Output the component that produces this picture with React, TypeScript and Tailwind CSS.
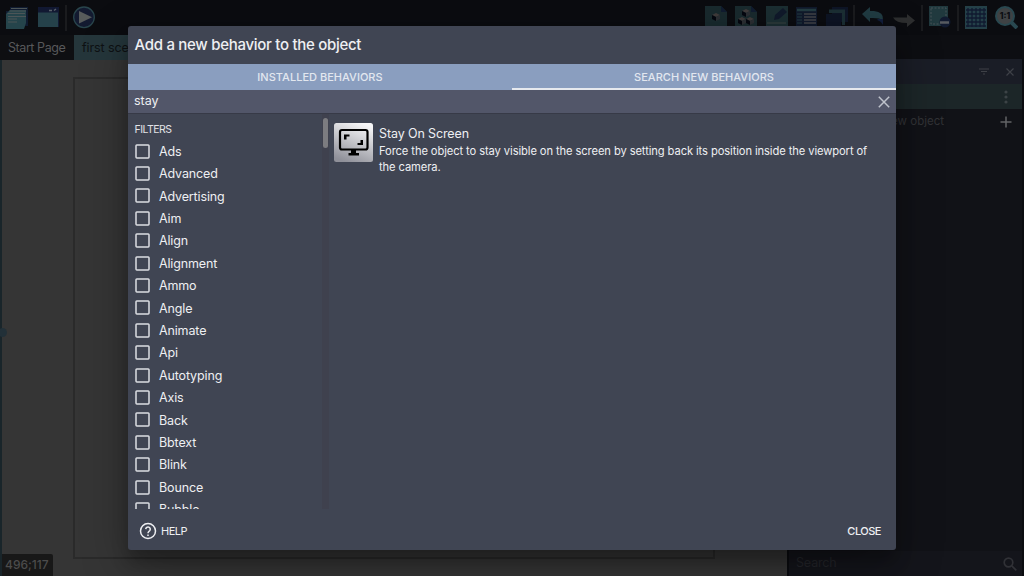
import type { ReactNode } from 'react';

const filters = [
  'Ads', 'Advanced', 'Advertising', 'Aim', 'Align', 'Alignment', 'Ammo', 'Angle', 'Animate',
  'Api', 'Autotyping', 'Axis', 'Back', 'Bbtext', 'Blink', 'Bounce', 'Bubble',
];

function Tool({ children, className = '' }: { children: ReactNode; className?: string }) {
  return (
    <svg viewBox="0 0 24 24" className={`h-6 w-6 shrink-0 ${className}`} fill="none">
      {children}
    </svg>
  );
}

function Separator({ className = '' }: { className?: string }) {
  return <div className={`h-[26px] w-[2px] shrink-0 bg-[#1a1b1e] ${className}`} />;
}

function Cube({ x, y }: { x: number; y: number }) {
  return (
    <g transform={`translate(${x} ${y})`}>
      <path d="M0 2 4 0 8 2 4 4Z" fill="#403b3b" />
      <path d="M0 2 4 4V8L0 6Z" fill="#05070f" />
      <path d="M4 4 8 2V6L4 8Z" fill="#2b2e33" />
    </g>
  );
}

function Toolbar() {
  return (
    <header className="flex h-[35px] shrink-0 items-start justify-between bg-[#0b0c10] pt-[5px]">
      <div className="flex pl-[5px]">
        <Tool>
          <path d="M5 2H23V21H18V24H1V6H5Z" fill="#101b30" />
          <path d="M5 5H21V18L19 24H1V9Z" fill="#25444b" />
          <path d="M6 3.500H22M4.500 6H21M2.500 8.500H20M3 11.500H21M3 14H12M3 17H12" stroke="#4c5557" strokeWidth="1.200" />
        </Tool>
        <Tool className="ml-[7px]">
          <path d="M2 2H23V22H2Z" fill="#111832" />
          <path d="M2 7.500H22V22H2Z" fill="#25414a" />
          <path d="M13 5.500H16M18 5.500 20 4" stroke="#575e68" strokeWidth="1.500" />
        </Tool>
        <Separator className="ml-[5px]" />
        <Tool className="ml-[5px]">
          <circle cx="12" cy="12.300" r="10.300" fill="#131a30" stroke="#29454c" strokeWidth="1.300" />
          <path d="M7 6V18.500L20 12.300Z" fill="#575b5b" />
        </Tool>
      </div>
      <div className="flex pr-[6px]">
        <Tool>
          <path d="M1 1H17L23 7V24H1Z" fill="#192a2e" />
          <path d="M17 1V7H23Z" fill="#101b30" />
          <Cube x={8} y={8} />
        </Tool>
        <Tool className="ml-[6px]">
          <path d="M1 1H17L23 7V24H1Z" fill="#192a2e" />
          <path d="M17 1V7H23Z" fill="#101b30" />
          <Cube x={8} y={4} />
          <Cube x={4} y={12} />
          <Cube x={12} y={12} />
        </Tool>
        <Tool className="ml-[7px]">
          <path d="M1 1H23V22H1Z" fill="#1b2e32" />
          <path d="M9 15 10 10 18 3 22 7 14 14Z" fill="#10192b" />
          <path d="M2 18H21" stroke="#303c3d" strokeWidth="1.500" />
        </Tool>
        <Tool className="ml-[6px]">
          <path d="M1 2H22V22H1Z" fill="#10192b" />
          <path d="M2 5H21" stroke="#233c42" strokeWidth="2.500" />
          <path d="M2 9H7M2 12H7M2 15H7M2 18H7" stroke="#233c42" strokeWidth="1.200" />
          <path d="M9 9H21M9 12H21M9 15H21M9 18H21" stroke="#414348" strokeWidth="1.300" />
        </Tool>
        <Tool className="ml-[6px]">
          <path d="M7 2H23V17H7Z" fill="#0e1526" />
          <path d="M4 4.500H20V20H17V8H4Z" fill="#1b2f34" />
          <path d="M1 9H16V22H1Z" fill="#0d1424" />
        </Tool>
        <Separator className="ml-[4px]" />
        <Tool className="ml-[6px]">
          <path d="M1 9 9 2V6H13Q23 7 22 15Q18 12.500 9 13V17Z" fill="#203b42" />
          <path d="M17 14H22V20Q20 16 16 15Z" fill="#111d3a" />
        </Tool>
        <Tool className="ml-[7px]">
          <path d="M23 15.500 15 9V12.500H1Q4 18 15 18V22Z" fill="#2d2e2f" />
        </Tool>
        <Separator className="ml-[5px]" />
        <Tool className="ml-[5px]">
          <path d="M1 1H20V21H1Z" fill="#20393e" />
          <path d="M3 3H18V19H3Z" stroke="#465356" strokeDasharray="2 1.500" />
          <circle cx="17" cy="17" r="5.500" fill="#111a30" />
          <path d="M12 17.500H21" stroke="#575b60" strokeWidth="2.500" />
        </Tool>
        <Separator className="ml-[5px]" />
        <Tool className="ml-[5px]">
          <path d="M1 1H23V24H1Z" fill="#244048" />
          <path d="M2 5H22M2 9H22M2 13H22M2 17H22M2 21H22M4 3V22M8 3V22M12 3V22M16 3V22M20 3V22" stroke="#101a30" strokeWidth="1.300" />
        </Tool>
        <Tool className="ml-[6px]">
          <path d="m17 17 6 6" stroke="#294850" strokeWidth="4" />
          <circle cx="11" cy="11" r="9" fill="#3f4244" stroke="#294850" strokeWidth="2" />
          <text x="11" y="14" textAnchor="middle" fontSize="8.500" fontWeight="800" fontFamily="Inter, sans-serif" fill="#0b0d12">1:1</text>
        </Tool>
      </div>
    </header>
  );
}

function Editor() {
  return (
    <div className="flex h-full w-full flex-col">
      <Toolbar />
      <nav className="flex h-[25px] shrink-0 bg-[#0d0e12] text-[12.5px] leading-[25px]">
        <div className="w-[74px] shrink-0 whitespace-nowrap bg-[#0e0f12] pl-[8px] text-[#57585a]"><span className="tracking-[-0.43px]">Start Page</span></div>
        <div className="w-[100px] whitespace-nowrap bg-[#25363b] pl-[8px] tracking-[-0.1px] text-[#0e1113]">first scene</div>
      </nav>
      <main className="flex min-h-0 flex-1">
        <section className="relative w-[787px] shrink-0 border-l-2 border-[#19252a] bg-[#353535] pl-[71px] pt-[17px]">
          <div className="h-[482px] w-[642px] border-2 border-[#2a2a2a]" />
          <div className="absolute -left-[4px] top-[268px] h-[9px] w-[9px] rounded-full bg-[#223038]" />
          <div className="absolute bottom-0 left-0 h-[22px] w-[51px] rounded-tr-[2px] bg-[#181818] pl-[3px] text-[12px] font-medium leading-[22px] text-[#4c4c4c]">
            496;117
          </div>
        </section>
        <aside className="flex flex-1 flex-col border-l-2 border-r-2 border-[#0b0c10] bg-[#111217]">
          <div className="-mt-px flex h-[25px] shrink-0 items-center justify-end gap-[17px] bg-[#1a1d26] pr-[8px]">
            <svg viewBox="0 0 10 7" className="h-[7px] w-[10px]" stroke="#3e4147" strokeWidth="1.200">
              <path d="M0 1H10M2 3.500H8M4 6H6" />
            </svg>
            <svg viewBox="0 0 8 8" className="h-2 w-2" stroke="#3e4147" strokeWidth="1.200">
              <path d="m.5.5 7 7m0-7-7 7" />
            </svg>
          </div>
          <div className="flex h-[25px] shrink-0 items-center justify-end bg-[#1c2628] pr-[14px]">
            <svg viewBox="0 0 4 14" className="h-[14px] w-[4px]" fill="#3c4346">
              <circle cx="2" cy="2" r="1.600" />
              <circle cx="2" cy="7" r="1.600" />
              <circle cx="2" cy="12" r="1.600" />
            </svg>
          </div>
          <div className="flex h-[25px] shrink-0 items-center justify-end pr-[10px] text-[11.5px] text-[#313236]">
            <span className="mr-[56px] whitespace-nowrap pt-px">Add a new object</span>
            <svg viewBox="0 0 12 12" className="h-3 w-3" stroke="#626366" strokeWidth="1.500">
              <path d="M6 .5V11.500M.5 6H11.500" />
            </svg>
          </div>
          <div className="mt-auto flex h-[25px] shrink-0 items-center justify-between bg-[#14151b] pl-[7px] pr-[5px] text-[12.5px] text-[#25262b]">
            <span className="tracking-[-0.15px]">Search</span>
            <svg viewBox="0 0 14 14" className="h-[14px] w-[14px]" fill="none" stroke="#303136" strokeWidth="1.700">
              <circle cx="5.500" cy="5.500" r="4.300" />
              <path d="m8.800 8.800 4.500 4.500" />
            </svg>
          </div>
        </aside>
      </main>
    </div>
  );
}

function BehaviorDialog() {
  return (
    <div className="absolute left-[128px] top-[26px] flex h-[524px] w-[768px] flex-col overflow-hidden rounded-[3px] bg-[#404553] text-[#eeeff2] shadow-[0_15px_48px_rgba(0,0,0,0.3),0_12px_16px_rgba(0,0,0,0.22)]">
      <h1 className="h-[38px] shrink-0 pl-[6.5px] text-[15px] font-medium leading-[38px]">
        <span className="tracking-[-0.29px]">Add a new behavior to the object</span>
      </h1>
      <div className="flex h-[26px] shrink-0 bg-[#8a9ebf] text-center text-[11px] font-medium leading-[26px] text-[#e2e7ef]">
        <div className="flex-1"><span className="tracking-[0.02px]">INSTALLED BEHAVIORS</span></div>
        <div className="flex-1 shadow-[inset_0_-2px_0_#e6e9ee]"><span className="tracking-[0.03px]">SEARCH NEW BEHAVIORS</span></div>
      </div>
      <div className="flex h-[24px] shrink-0 items-center justify-between border-b border-[#373a47] bg-[#525669] pl-[6px] pr-[6px] text-[12.5px]">
        <span className="-mt-[1px]">stay</span>
        <svg viewBox="0 0 12 12" className="h-3 w-3" stroke="#bfc3cc" strokeWidth="1.500">
          <path d="m.8.8 10.400 10.400m0-10.400L.8 11.200" />
        </svg>
      </div>
      <div className="flex h-[395px] shrink-0">
        <div className="h-full w-[194px] shrink-0 overflow-hidden pl-[6.5px]">
          <div className="mt-[8px] h-[18px] text-[10.500px] leading-[15px] text-[#e2e3e7]"><span className="tracking-[-0.5px]">FILTERS</span></div>
          {filters.map((name) => (
            <label key={name} className="flex h-[22.4px] items-center gap-[9.5px] text-[12.5px]">
              <svg viewBox="0 0 15 15" className="h-[15px] w-[15px] shrink-0" fill="none" stroke="#dcdee3" strokeWidth="1.500">
                <rect x="1" y="0.900" width="13" height="13" rx="0.800" />
              </svg>
              <span className="pt-[2px] tracking-[-0.14px]">{name}</span>
            </label>
          ))}
        </div>
        <div className="h-full w-[7px] shrink-0 bg-[#3f414e] pt-[4px]">
          <div className="ml-[1px] h-[30px] w-[5px] rounded-full bg-[#7c7c80]" />
        </div>
        <article className="flex flex-1 items-start gap-[6px] pl-[5px] pt-[9px]">
          <svg viewBox="0 0 39 39" className="h-[39px] w-[39px] shrink-0">
            <defs>
              <linearGradient id="tile" x1="0.700" y1="0" x2="0.300" y2="1">
                <stop stopColor="#f6f6f7" />
                <stop offset="1" stopColor="#8f9099" />
              </linearGradient>
            </defs>
            <rect width="39" height="39" rx="2.500" fill="url(#tile)" />
            <rect x="6" y="7" width="27.500" height="19.500" rx="2" fill="none" stroke="#000" strokeWidth="2.200" />
            <path d="M10 11.500H15.500V13.500H12.500V16.500H10ZM29 22H23.500V20H26.500V17H29ZM17 27H22V30H25V32.500H14.500V30H17Z" />
          </svg>
          <div className="pt-[2px]">
            <h2 className="text-[12.5px] leading-[17px]"><span className="tracking-[-0.12px]">Stay On Screen</span></h2>
            <p className="w-[502px] pt-[0.5px] text-[11.2px] leading-[16px] tracking-[-0.105px]">
              Force the object to stay visible on the screen by setting back its position inside the viewport of the camera.
            </p>
          </div>
        </article>
      </div>
      <footer className="flex flex-1 items-center justify-between pl-[11px] pr-[15px] pt-[3px] text-[11px] font-medium">
        <div className="flex items-center gap-[4px]">
          <svg viewBox="0 0 24 24" className="h-[18px] w-[18px]" fill="none" stroke="currentColor" strokeWidth="2">
            <circle cx="12" cy="12" r="10" />
            <path d="M9 9.500a3 3 0 1 1 5.200 2.100C13 12.800 12 13.100 12 15M12 16.500v2" />
          </svg>
          <span className="pt-px font-normal tracking-[-0.5px]">HELP</span>
        </div>
        <span className="pt-px tracking-[-0.5px]">CLOSE</span>
      </footer>
    </div>
  );
}

export default function App() {
  return (
    <div className="relative h-[576px] w-[1024px] overflow-hidden bg-[#0d0e12] font-['Inter','Liberation_Sans',sans-serif]">
      <Editor />
      <BehaviorDialog />
    </div>
  );
}
